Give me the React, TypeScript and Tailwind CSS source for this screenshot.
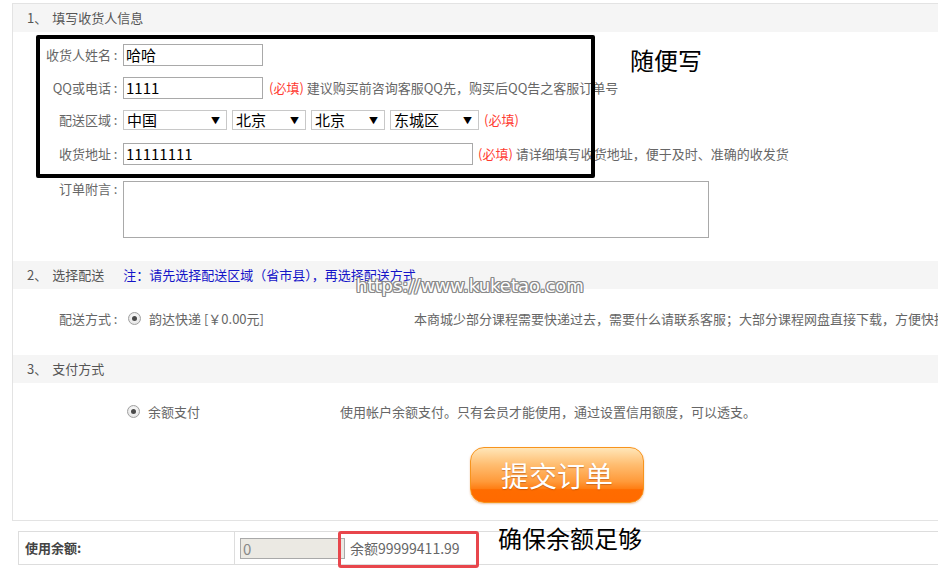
import React from "react";

const cjk = { fontFamily: '"Noto Sans CJK SC", "Noto Sans", sans-serif' };

function Radio() {
  return (
    <span className="flex h-[13px] w-[13px] shrink-0 items-center justify-center rounded-full border border-[#a0a0a0] bg-[radial-gradient(circle_at_50%_40%,#ffffff_0%,#dcdcdc_100%)]">
      <span className="h-[5px] w-[5px] rounded-full bg-[#4a4a4a]" />
    </span>
  );
}

function Select({ value, width }: { value: string; width: string }) {
  return (
    <div
      className={`flex h-[20px] items-center justify-between border border-[#c8c8c8] bg-white pl-[3px] pr-[6px] ${width}`}
    >
      <span className="text-[15px] leading-[20px] text-black">{value}</span>
      <span className="text-[9px] leading-none text-black">▼</span>
    </div>
  );
}

function Required() {
  return <span className="text-[#ff3b30]">(必填)</span>;
}

function Label({ text, leading }: { text: string; leading: string }) {
  return (
    <div className={`flex w-[107px] shrink-0 justify-end ${leading}`}>
      <span>{text}</span>
      <span className="w-[9px] text-center">:</span>
    </div>
  );
}

function SectionHeader({ num, title, children }: { num: string; title: string; children?: React.ReactNode }) {
  return (
    <div className="flex h-[28px] items-center bg-[#f5f5f5] pl-[14px] text-[13px] text-[#555]">
      <span>{num}、</span>
      <span className="ml-[5px]">{title}</span>
      {children}
    </div>
  );
}

export default function App() {
  return (
    <div className="relative h-[573px] w-[938px] overflow-hidden bg-white pt-[3px]" style={cjk}>
      {/* order panel */}
      <div className="ml-[12px] h-[518px] w-[940px] border border-[#e3e3e3]">
        <SectionHeader num="1" title="填写收货人信息" />

        <div className="pt-[12px] text-[13px] text-[#666]">
          <div className="flex h-[33px] items-start">
            <Label text="收货人姓名" leading="leading-[22px]" />
            <div className="ml-[3px] h-[22px] w-[140px] border border-[#a9a9a9] pl-[2px] text-[15px] leading-[20px] text-black">
              哈哈
            </div>
          </div>
          <div className="flex h-[33px] items-start">
            <Label text="QQ或电话" leading="leading-[22px]" />
            <div className="ml-[3px] h-[22px] w-[140px] border border-[#a9a9a9] pl-[2px] text-[15px] leading-[20px] text-black">
              1111
            </div>
            <div className="ml-[6px] leading-[22px]">
              <Required /> 建议购买前咨询客服QQ先，购买后QQ告之客服订单号
            </div>
          </div>
          <div className="flex h-[33px] items-start">
            <Label text="配送区域" leading="leading-[20px]" />
            <div className="ml-[3px] flex gap-[5px]">
              <Select value="中国" width="w-[104px]" />
              <Select value="北京" width="w-[74px]" />
              <Select value="北京" width="w-[74px]" />
              <Select value="东城区" width="w-[89px]" />
            </div>
            <div className="ml-[5px] leading-[20px]">
              <Required />
            </div>
          </div>
          <div className="flex h-[33px] items-start">
            <Label text="收货地址" leading="leading-[22px]" />
            <div className="ml-[3px] h-[22px] w-[350px] border border-[#a9a9a9] pl-[2px] text-[15px] leading-[20px] text-black">
              11111111
            </div>
            <div className="ml-[5px] leading-[22px]">
              <Required /> 请详细填写收货地址，便于及时、准确的收发货
            </div>
          </div>
          <div className="mt-[5px] flex items-start">
            <Label text="订单附言" leading="leading-[16px]" />
            <div className="ml-[3px] h-[57px] w-[586px] border border-[#a9a9a9]" />
          </div>
        </div>

        <div className="mt-[23px]">
          <SectionHeader num="2" title="选择配送">
            <span className="ml-[19px] text-[#1414c8]">注：请先选择配送区域（省市县），再选择配送方式</span>
          </SectionHeader>
        </div>

        <div className="flex h-[66px] items-start pt-[22px] text-[13px] text-[#666]">
          <Label text="配送方式" leading="leading-[16px]" />
          <div className="ml-[8px] mt-[1px]">
            <Radio />
          </div>
          <div className="ml-[8px] leading-[16px]">韵达快递 [￥0.00元]</div>
          <div className="ml-[150px] whitespace-nowrap leading-[16px]">
            本商城少部分课程需要快递过去，需要什么请联系客服；大部分课程网盘直接下载，方便快捷
          </div>
        </div>

        <SectionHeader num="3" title="支付方式" />

        <div className="flex items-start pt-[21px] text-[13px] text-[#666]">
          <div className="ml-[114px] mt-[1px]">
            <Radio />
          </div>
          <div className="ml-[8px] leading-[16px]">余额支付</div>
          <div className="ml-[140px] leading-[16px]">使用帐户余额支付。只有会员才能使用，通过设置信用额度，可以透支。</div>
        </div>

        <div className="ml-[457px] mt-[27px] flex h-[56px] w-[174px] items-center justify-center rounded-[14px] border border-[#f7941d] bg-[linear-gradient(to_bottom,#ffe6b8_0%,#ffbe72_30%,#ff9a3a_62%,#ff7d12_76%,#ff6c00_77%,#ff6a00_100%)] shadow-[0_1px_2px_rgba(200,90,0,0.35)]">
          <span className="text-[28px] leading-none text-white [text-shadow:0_1px_1px_rgba(150,60,0,0.45)]">提交订单</span>
        </div>
      </div>

      {/* balance row */}
      <div className="ml-[18px] mt-[10px] flex h-[34px] w-[930px] border border-[#dddddd] text-[13px]">
        <div className="flex w-[216px] items-center border-r border-[#dddddd] pl-[6px] font-bold text-[#444]">
          使用余额:
        </div>
        <div className="flex items-center pl-[5px]">
          <div className="h-[21px] w-[105px] border border-[#a9a9a9] bg-[#ebe9e3] pl-[2px] text-[15px] leading-[19px] text-[#888]">
            0
          </div>
          <span className="ml-[5px] text-[14px] text-[#666]">余额99999411.99</span>
        </div>
      </div>

      {/* annotations */}
      <div className="pointer-events-none absolute left-[36px] top-[35px] h-[143px] w-[559px] rounded-[2px] border-[4px] border-black" />
      <div className="absolute left-[630px] top-[46px] text-[24px] leading-[28px] text-black">随便写</div>
      <div className="pointer-events-none absolute left-[338px] top-[531px] h-[37px] w-[141px] rounded-[3px] border-[3px] border-[#e8464c]" />
      <div className="absolute left-[498px] top-[524px] text-[24px] leading-[28px] text-black">确保余额足够</div>
      <div
        className="pointer-events-none absolute left-[356px] top-[276px] text-[18px] leading-[20px] text-white [text-shadow:1px_0_#8a8a8a,-1px_0_#8a8a8a,0_1px_#8a8a8a,0_-1px_#8a8a8a,1px_1px_#8a8a8a,-1px_-1px_#8a8a8a,1px_-1px_#8a8a8a,-1px_1px_#8a8a8a]"
        style={{ fontFamily: '"DejaVu Sans", sans-serif' }}
      >
        https://www.kuketao.com
      </div>
    </div>
  );
}
